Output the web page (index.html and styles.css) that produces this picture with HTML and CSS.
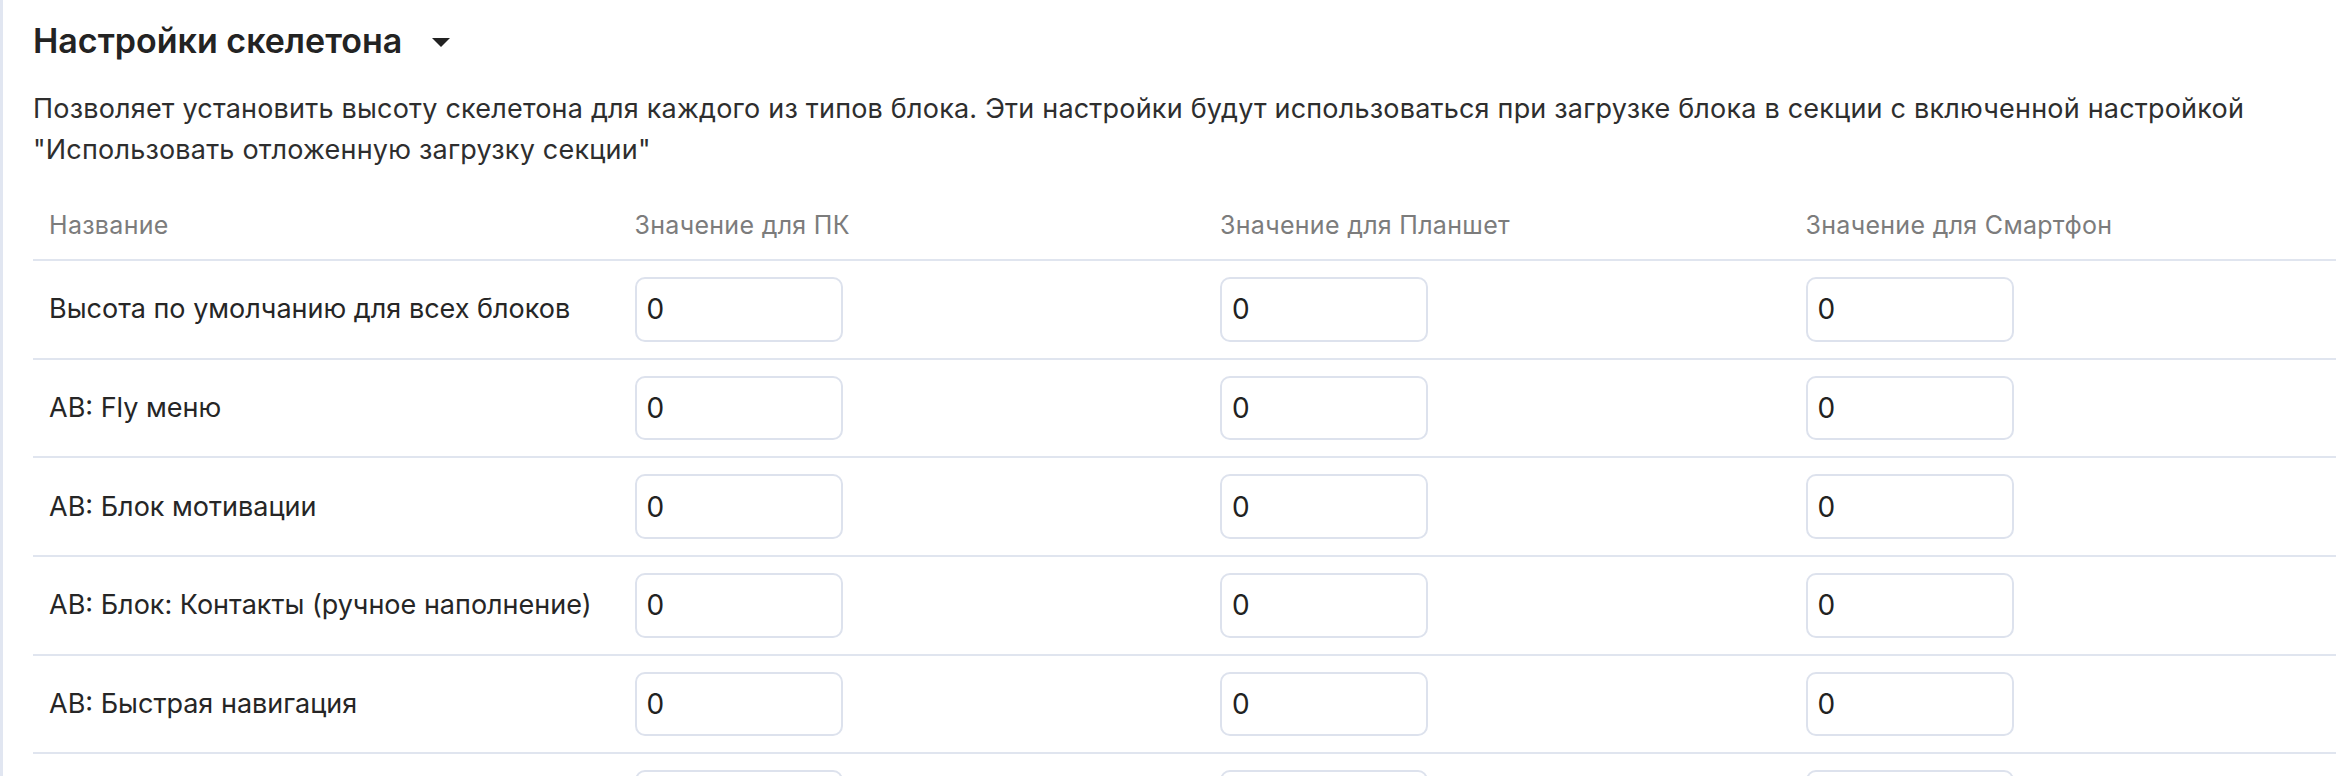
FILE: index.html
```html
<!DOCTYPE html>
<html lang="ru">
<head>
<meta charset="utf-8">
<title>Настройки скелетона</title>
<link rel="stylesheet" href="styles.css">
</head>
<body>
<div class="panel">
  <div class="title-row">
    <h2 class="title">Настройки скелетона</h2>
    <svg class="caret" width="18" height="9" viewBox="0 0 18 9" aria-hidden="true"><path d="M0 0H18L9 9Z" fill="#222"/></svg>
  </div>
  <p class="desc">Позволяет установить высоту скелетона для каждого из типов блока. Эти настройки будут использоваться при загрузке блока в секции с включенной настройкой "Использовать отложенную загрузку секции"</p>
  <div class="table-wrap">
    <table class="skel">
      <colgroup><col class="c"><col class="c"><col class="c"><col class="c"></colgroup>
      <thead>
        <tr><th>Название</th><th>Значение для ПК</th><th>Значение для Планшет</th><th>Значение для Смартфон</th></tr>
      </thead>
      <tbody>
        <tr><td class="name">Высота по умолчанию для всех блоков</td><td><input class="val" value="0"></td><td><input class="val" value="0"></td><td><input class="val" value="0"></td></tr>
        <tr><td class="name">AB: Fly меню</td><td><input class="val" value="0"></td><td><input class="val" value="0"></td><td><input class="val" value="0"></td></tr>
        <tr><td class="name">AB: Блок мотивации</td><td><input class="val" value="0"></td><td><input class="val" value="0"></td><td><input class="val" value="0"></td></tr>
        <tr><td class="name">AB: Блок: Контакты (ручное наполнение)</td><td><input class="val" value="0"></td><td><input class="val" value="0"></td><td><input class="val" value="0"></td></tr>
        <tr><td class="name">AB: Быстрая навигация</td><td><input class="val" value="0"></td><td><input class="val" value="0"></td><td><input class="val" value="0"></td></tr>
        <tr><td class="name">AB: Галерея</td><td><input class="val" value="0"></td><td><input class="val" value="0"></td><td><input class="val" value="0"></td></tr>
      </tbody>
    </table>
  </div>
</div>
</body>
</html>
```
FILE: styles.css
```css
html, body {
  margin: 0;
  padding: 0;
  background: #ffffff;
  overflow: hidden;
}
body {
  font-family: Inter, "Noto Sans", "Liberation Sans", sans-serif;
  color: #2b2b2b;
}
.panel {
  border-left: 3px solid #e1e6f1;
  padding: 16px 0 0 30px;
  min-height: 776px;
  box-sizing: border-box;
}
.title-row {
  display: flex;
  align-items: center;
}
.title {
  margin: 0;
  font-size: 34px;
  line-height: 50px;
  font-weight: 600;
  color: #232323;
}
.caret {
  margin-left: 30px;
  margin-top: 2px;
}
.desc {
  margin: 22px 0 0;
  font-size: 27px;
  letter-spacing: 0.2px;
  line-height: 41px;
  color: #2e2e2e;
}
.table-wrap {
  margin-top: 22px;
  width: 2400px;
}
.skel {
  border-collapse: collapse;
  table-layout: fixed;
  width: 2342px;
}
.skel .c {
  width: 585.5px;
}
.skel th {
  text-align: left;
  font-weight: 400;
  font-size: 25px;
  letter-spacing: 0.3px;
  line-height: 35px;
  color: #7c7c7c;
  padding: 16px;
  border-bottom: 2px solid #e0e5ef;
}
.skel td {
  padding: 16px;
  border-bottom: 2px solid #e0e5ef;
  vertical-align: middle;
  font-size: 27px;
  line-height: 36px;
  white-space: nowrap;
}
.skel td.name {
  color: #262626;
}
.val {
  display: block;
  box-sizing: border-box;
  width: 208px;
  height: 64.7px;
  margin: 0;
  padding: 0 10px;
  border: 2px solid #dde2ed;
  border-radius: 10px;
  background: #fff;
  font-family: Inter, "Noto Sans", "Liberation Sans", sans-serif;
  font-size: 28px;
  color: #222;
  outline: none;
}
```
